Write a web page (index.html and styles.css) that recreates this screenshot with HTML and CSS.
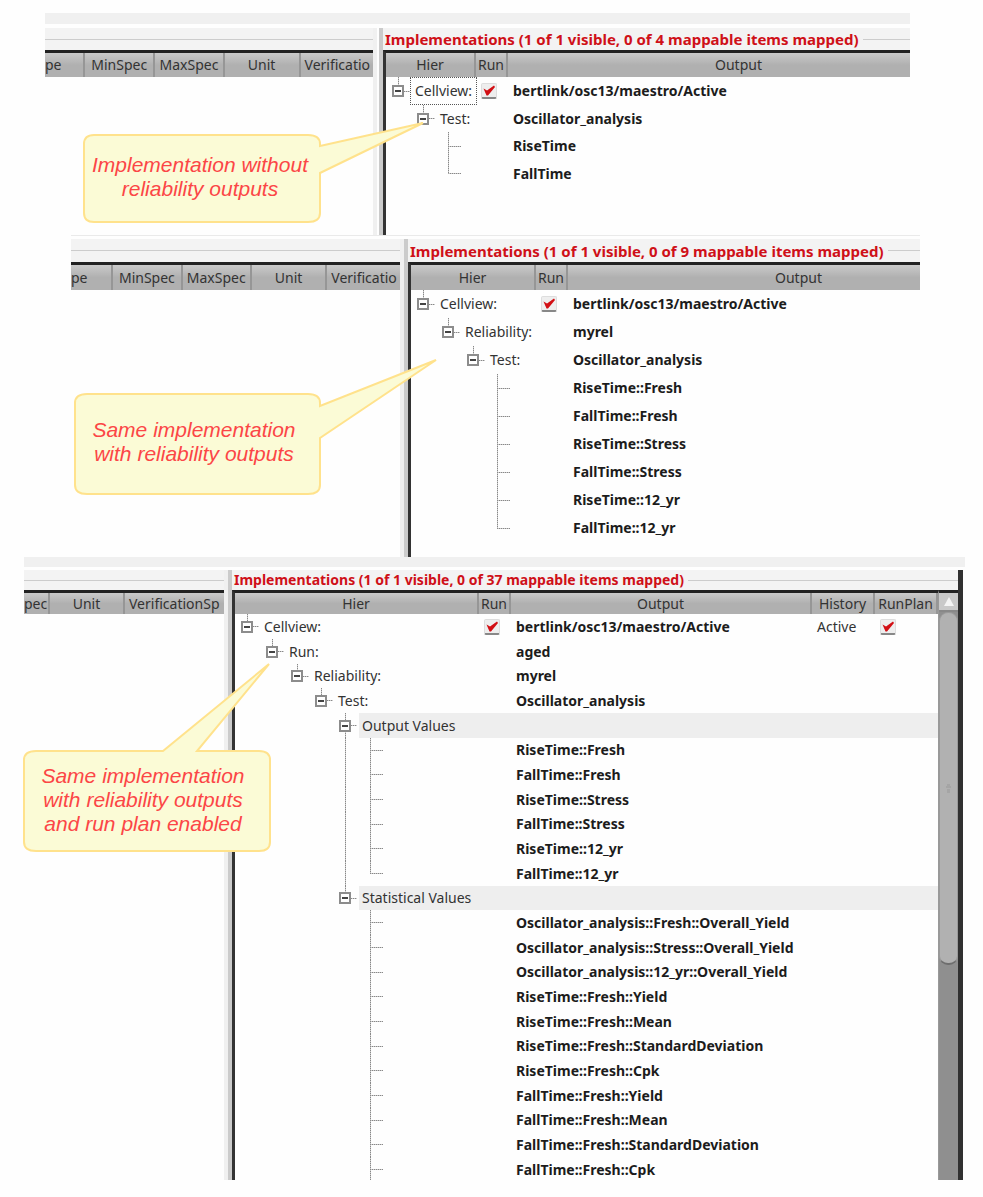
FILE: index.html
```html
<!DOCTYPE html>
<html lang="en">
<head>
<meta charset="utf-8">
<title>Implementations with and without reliability outputs</title>
<link rel="stylesheet" href="styles.css">
</head>
<body>
<main class="page">

<section class="shot shot-plain">
  <div class="strip"></div>
  <div class="split">
    <div class="pane">
      <div class="caption"><span class="rule"></span></div>
      <table class="grid">
        <colgroup><col class="w40"><col class="w69"><col class="w69"><col class="w75"><col class="w143"></colgroup>
        <thead><tr><th class="cut">pe</th><th>MinSpec</th><th>MaxSpec</th><th>Unit</th><th class="cut">Verificatio</th></tr></thead>
      </table>
    </div>
    <div class="sash"></div>
    <div class="pane framed">
      <div class="caption"><h2>Implementations (1 of 1 visible, 0 of 4 mappable items mapped)</h2><span class="rule"></span></div>
      <table class="grid">
        <colgroup><col class="w90"><col class="w32"><col class="w463"></colgroup>
        <thead><tr><th>Hier</th><th>Run</th><th>Output</th></tr></thead>
        <tbody>
          <tr><td><div class="tree"><button class="toggle" aria-label="Collapse Cellview"><i></i></button><span class="focus">Cellview:</span></div></td><td><input type="checkbox" checked aria-label="Run"></td><td class="out">bertlink/osc13/maestro/Active</td></tr>
          <tr><td><div class="tree l1"><button class="toggle" aria-label="Collapse Test"><i></i></button><span>Test:</span></div></td><td></td><td class="out">Oscillator_analysis</td></tr>
          <tr><td><div class="tree l2"><span class="branch"></span></div></td><td></td><td class="out">RiseTime</td></tr>
          <tr><td><div class="tree l2"><span class="branch last"></span></div></td><td></td><td class="out">FallTime</td></tr>
        </tbody>
      </table>
    </div>
  </div>
  <aside class="callout callout-plain">
    <svg width="344" height="104" viewBox="0 0 344 104" aria-hidden="true"><path d="M12 15H226Q238 15 238 24V26L341 3L238 53V93Q238 102 226 102H12Q2 102 2 93V24Q2 15 12 15Z"/></svg>
    <p>Implementation without<br>reliability outputs</p>
  </aside>
</section>

<section class="shot shot-rel">
  <div class="split">
    <div class="pane">
      <div class="caption"><span class="rule"></span></div>
      <table class="grid">
        <colgroup><col class="w42"><col class="w69"><col class="w69"><col class="w75"><col class="w143"></colgroup>
        <thead><tr><th class="cut">pe</th><th>MinSpec</th><th>MaxSpec</th><th>Unit</th><th class="cut">Verificatio</th></tr></thead>
      </table>
    </div>
    <div class="sash"></div>
    <div class="pane framed">
      <div class="caption"><h2>Implementations (1 of 1 visible, 0 of 9 mappable items mapped)</h2><span class="rule"></span></div>
      <table class="grid">
        <colgroup><col class="w125"><col class="w32"><col class="w463"></colgroup>
        <thead><tr><th>Hier</th><th>Run</th><th>Output</th></tr></thead>
        <tbody>
          <tr><td><div class="tree"><button class="toggle" aria-label="Collapse Cellview"><i></i></button><span>Cellview:</span></div></td><td><input type="checkbox" checked aria-label="Run"></td><td class="out">bertlink/osc13/maestro/Active</td></tr>
          <tr><td><div class="tree l1"><button class="toggle" aria-label="Collapse Reliability"><i></i></button><span>Reliability:</span></div></td><td></td><td class="out">myrel</td></tr>
          <tr><td><div class="tree l2"><button class="toggle" aria-label="Collapse Test"><i></i></button><span>Test:</span></div></td><td></td><td class="out">Oscillator_analysis</td></tr>
          <tr><td><div class="tree l3"><span class="branch"></span></div></td><td></td><td class="out">RiseTime::Fresh</td></tr>
          <tr><td><div class="tree l3"><span class="branch"></span></div></td><td></td><td class="out">FallTime::Fresh</td></tr>
          <tr><td><div class="tree l3"><span class="branch"></span></div></td><td></td><td class="out">RiseTime::Stress</td></tr>
          <tr><td><div class="tree l3"><span class="branch"></span></div></td><td></td><td class="out">FallTime::Stress</td></tr>
          <tr><td><div class="tree l3"><span class="branch"></span></div></td><td></td><td class="out">RiseTime::12_yr</td></tr>
          <tr><td><div class="tree l3"><span class="branch last"></span></div></td><td></td><td class="out">FallTime::12_yr</td></tr>
        </tbody>
      </table>
    </div>
  </div>
  <aside class="callout callout-rel">
    <svg width="368" height="140" viewBox="0 0 368 140" aria-hidden="true"><path d="M14 37H235Q247 37 247 46V49L363 3L247 81V128Q247 137 235 137H14Q2 137 2 128V46Q2 37 14 37Z"/></svg>
    <p>Same implementation<br>with reliability outputs</p>
  </aside>
</section>

<section class="shot shot-plan">
  <div class="strip"></div>
  <div class="split">
    <div class="pane">
      <div class="caption"><span class="rule"></span></div>
      <table class="grid">
        <colgroup><col class="w26"><col class="w75"><col class="w143"></colgroup>
        <thead><tr><th class="cut">pec</th><th>Unit</th><th class="cut">VerificationSp</th></tr></thead>
      </table>
    </div>
    <div class="sash"></div>
    <div class="pane framed boxed">
      <div class="caption"><h2>Implementations (1 of 1 visible, 0 of 37 mappable items mapped)</h2><span class="rule"></span></div>
      <div class="scroller">
      <table class="grid">
        <colgroup><col class="w244"><col class="w32"><col><col class="w63"><col class="w63"></colgroup>
        <thead><tr><th>Hier</th><th>Run</th><th>Output</th><th>History</th><th>RunPlan</th></tr></thead>
        <tbody>
          <tr><td><div class="tree"><button class="toggle" aria-label="Collapse Cellview"><i></i></button><span>Cellview:</span></div></td><td><input type="checkbox" checked aria-label="Run"></td><td class="out">bertlink/osc13/maestro/Active</td><td class="hist">Active</td><td><input type="checkbox" checked aria-label="RunPlan"></td></tr>
          <tr><td><div class="tree l1"><button class="toggle" aria-label="Collapse Run"><i></i></button><span>Run:</span></div></td><td></td><td class="out">aged</td><td></td><td></td></tr>
          <tr><td><div class="tree l2"><button class="toggle" aria-label="Collapse Reliability"><i></i></button><span>Reliability:</span></div></td><td></td><td class="out">myrel</td><td></td><td></td></tr>
          <tr><td><div class="tree l3"><button class="toggle" aria-label="Collapse Test"><i></i></button><span>Test:</span></div></td><td></td><td class="out">Oscillator_analysis</td><td></td><td></td></tr>
          <tr class="group"><td><div class="tree l4"><button class="toggle open" aria-label="Collapse Output Values"><i></i></button><span>Output Values</span></div></td><td></td><td></td><td></td><td></td></tr>
          <tr><td><div class="tree l4"><span class="guide"></span><span class="branch"></span></div></td><td></td><td class="out">RiseTime::Fresh</td><td></td><td></td></tr>
          <tr><td><div class="tree l4"><span class="guide"></span><span class="branch"></span></div></td><td></td><td class="out">FallTime::Fresh</td><td></td><td></td></tr>
          <tr><td><div class="tree l4"><span class="guide"></span><span class="branch"></span></div></td><td></td><td class="out">RiseTime::Stress</td><td></td><td></td></tr>
          <tr><td><div class="tree l4"><span class="guide"></span><span class="branch"></span></div></td><td></td><td class="out">FallTime::Stress</td><td></td><td></td></tr>
          <tr><td><div class="tree l4"><span class="guide"></span><span class="branch"></span></div></td><td></td><td class="out">RiseTime::12_yr</td><td></td><td></td></tr>
          <tr><td><div class="tree l4"><span class="guide"></span><span class="branch last"></span></div></td><td></td><td class="out">FallTime::12_yr</td><td></td><td></td></tr>
          <tr class="group"><td><div class="tree l4"><button class="toggle" aria-label="Collapse Statistical Values"><i></i></button><span>Statistical Values</span></div></td><td></td><td></td><td></td><td></td></tr>
          <tr><td><div class="tree l5"><span class="branch"></span></div></td><td></td><td class="out">Oscillator_analysis::Fresh::Overall_Yield</td><td></td><td></td></tr>
          <tr><td><div class="tree l5"><span class="branch"></span></div></td><td></td><td class="out">Oscillator_analysis::Stress::Overall_Yield</td><td></td><td></td></tr>
          <tr><td><div class="tree l5"><span class="branch"></span></div></td><td></td><td class="out">Oscillator_analysis::12_yr::Overall_Yield</td><td></td><td></td></tr>
          <tr><td><div class="tree l5"><span class="branch"></span></div></td><td></td><td class="out">RiseTime::Fresh::Yield</td><td></td><td></td></tr>
          <tr><td><div class="tree l5"><span class="branch"></span></div></td><td></td><td class="out">RiseTime::Fresh::Mean</td><td></td><td></td></tr>
          <tr><td><div class="tree l5"><span class="branch"></span></div></td><td></td><td class="out">RiseTime::Fresh::StandardDeviation</td><td></td><td></td></tr>
          <tr><td><div class="tree l5"><span class="branch"></span></div></td><td></td><td class="out">RiseTime::Fresh::Cpk</td><td></td><td></td></tr>
          <tr><td><div class="tree l5"><span class="branch"></span></div></td><td></td><td class="out">FallTime::Fresh::Yield</td><td></td><td></td></tr>
          <tr><td><div class="tree l5"><span class="branch"></span></div></td><td></td><td class="out">FallTime::Fresh::Mean</td><td></td><td></td></tr>
          <tr><td><div class="tree l5"><span class="branch"></span></div></td><td></td><td class="out">FallTime::Fresh::StandardDeviation</td><td></td><td></td></tr>
          <tr><td><div class="tree l5"><span class="branch"></span></div></td><td></td><td class="out">FallTime::Fresh::Cpk</td><td></td><td></td></tr>
        </tbody>
      </table>
      <div class="scrollbar">
        <button class="up" aria-label="Scroll up"><svg width="10" height="9" viewBox="0 0 10 9" aria-hidden="true"><path d="M5 0L10 9H0Z" fill="#f4f4f4"/></svg></button>
        <div class="thumb"><svg width="5" height="9" viewBox="0 0 5 9" aria-hidden="true"><path d="M1 1H4M0 3H5M1 6H4M1 8H4" stroke="#999"/></svg></div>
      </div>
      </div>
    </div>
  </div>
  <aside class="callout callout-plan">
    <svg width="250" height="192" viewBox="0 0 250 192" aria-hidden="true"><path d="M14 90H140L246 3L174 90H236Q247 90 247 99V181Q247 190 236 190H13Q1 190 1 181V99Q1 90 13 90Z"/></svg>
    <p>Same implementation<br>with reliability outputs<br>and run plan enabled</p>
  </aside>
</section>

</main>
</body>
</html>
```
FILE: styles.css
```css
* { box-sizing: border-box; }

body {
  margin: 0;
  background: #fefefe;
  color: #333;
  font: 14px/20px "Noto Sans", "Open Sans", sans-serif;
}

.page { padding: 13px 0 16px; overflow: hidden; }

/* One captured window */
.shot { position: relative; }
.shot-plain { margin: 0 73px 0 45px; --row: 28px; --band: 22px; --head: 24px; }
.shot-rel { margin: 0 63px 0 71px; border-top: 1px solid #eaeaea; padding-top: 3px; --row: 28px; --band: 23px; --head: 25px; }
.shot-plan { margin: 0 18px 0 24px; --row: 25px; --band: 20px; --head: 21px; }

.strip { height: 11px; margin-bottom: 4px; background: #f0f0f0; }
.shot-plan .strip { height: 10px; margin-bottom: 3px; }

.split { display: grid; }
.shot-plain .split { grid-template-columns: 328px 10px 1fr; height: 207px; }
.shot-rel .split { grid-template-columns: 329px 8px 1fr; height: 318px; }
.shot-plan .split { grid-template-columns: 200px 8px 1fr; height: 610px; }

.pane { min-width: 0; overflow: hidden; display: flex; flex-direction: column; }

.sash { border-left: 4px solid #f0f0f0; border-right: 4px solid #cbcbcb; }

/* Group title with its rule */
.caption {
  display: flex;
  align-items: center;
  height: var(--band);
  flex: none;
  background: #f3f3f3;
}
.caption h2 {
  margin: 0 4px 0 2px;
  font-size: 15px;
  line-height: 20px;
  color: #cf1018;
  white-space: nowrap;
}
.shot-plan .caption h2 { font-size: 14px; }
.rule { flex: 1; height: 1px; background: #ccc; }

/* Data table */
.grid {
  width: 100%;
  table-layout: fixed;
  border-collapse: separate;
  border-spacing: 0;
  border-top: 3px solid #222;
}
.framed .grid { border-left: 3px solid #333; }
.shot-plain .framed .grid { width: 588px; }
.shot-rel .framed .grid { width: 623px; }
.pane:not(.framed) .grid { width: 400px; }
.shot-plan .pane:not(.framed) .grid { width: 244px; }
.shot .framed { background: linear-gradient(#333, #333) 0 var(--band) / 3px 100% no-repeat; }

.grid th {
  height: var(--head);
  padding: 0;
  font-weight: 400;
  text-align: center;
  white-space: nowrap;
  line-height: 20px;
  background: linear-gradient(#cacaca, #b0b0b0 50%, #b0b0b0);
  border-right: 2px solid #969696;
}
.grid th.cut { text-align: left; padding-left: 4px; }
.grid th.cut:first-child { padding-left: 0; }

.grid td {
  height: var(--row);
  padding: 0;
  line-height: 20px;
  white-space: nowrap;
}
.shot-plain .grid tr:nth-child(even) { --row: 27px; }
.shot-plan .grid tr:nth-child(3n) { --row: 24px; }
.grid .out { padding-left: 5px; font-weight: 700; color: #1c1c1c; }
.grid .hist { padding-left: 5px; }

.w26 { width: 26px; }
.w32 { width: 32px; }
.w40 { width: 40px; }
.w42 { width: 42px; }
.w63 { width: 63px; }
.w69 { width: 69px; }
.w75 { width: 75px; }
.w90 { width: 90px; }
.w125 { width: 125px; }
.w143 { width: 143px; }
.w244 { width: 244px; }
.w463 { width: 463px; }

/* Tree column */
.tree { display: flex; align-items: center; height: var(--row); }
.l1 { padding-left: 25px; }
.l2 { padding-left: 50px; }
.l3 { padding-left: 74px; }
.l4 { padding-left: 98px; }
.l5 { padding-left: 123px; }
.tree > span:last-child { padding: 0 4px; }

.toggle, .tree .branch, .guide {
  --v: repeating-linear-gradient(#888 0 1px, #ccc 1px 2px);
  --h: repeating-linear-gradient(90deg, #888 0 1px, #ccc 1px 2px);
  flex: none;
  width: 25px;
  height: 100%;
  padding: 0;
  border: 0;
}
.toggle {
  display: flex;
  align-items: center;
  background: var(--v) 12px 0 / 1px 40% no-repeat, var(--h) 18px 50% / 6px 1px no-repeat;
}
.toggle.open { background: var(--v) 12px 0 / 1px 100% no-repeat, var(--h) 18px 50% / 6px 1px no-repeat; }
.toggle i {
  width: 12px;
  height: 12px;
  margin-left: 6px;
  border: 2px solid #8c8c8c;
  background: linear-gradient(#444, #444) 50% 50% / 6px 2px no-repeat #fefefe;
}
.tree .branch { background: var(--v) 12px 0 / 1px 100% no-repeat, var(--h) 12px 50% / 13px 1px no-repeat; }
.tree .branch.last { background: var(--v) 12px 0 / 1px 50% no-repeat, var(--h) 12px 50% / 13px 1px no-repeat; }
.guide { background: var(--v) 12px 0 / 1px 100% no-repeat; }

.focus { outline: 1px dotted #555; line-height: 26px; }

.group td { background: #eee; }
.group td:first-child { background: linear-gradient(#eee, #eee) 124px 0 no-repeat; }

input[type="checkbox"] {
  appearance: none;
  display: block;
  width: 16px;
  height: 16px;
  margin: 0 0 0 5px;
  border: 1px solid #ddd;
  border-bottom: 2px solid #888;
  border-radius: 2px;
  background: url("data:image/svg+xml,%3Csvg xmlns='http://www.w3.org/2000/svg' viewBox='0 0 14 13'%3E%3Cpath d='M1.5 4.5L5 6.5L12 1.5L13 3L6 11.5H4.5Z' fill='%23d20f14'/%3E%3C/svg%3E") center / 14px 13px no-repeat #eee;
}

/* Vertical scrollbar */
.boxed { border-right: 5px solid #303030; margin-right: 2px; }
.scroller { display: flex; flex: 1; min-height: 0; }
.scroller .grid { flex: 1; width: auto; min-width: 0; }
.scrollbar {
  flex: none;
  width: 20px;
  display: flex;
  flex-direction: column;
  border-top: 3px solid #222;
  border-left: 1px solid #999;
  background: #8f8f8f;
}
.up { height: 19px; padding: 0; border: 0; border-bottom: 2px solid #888; background: #c9c9c9; line-height: 0; }
.thumb {
  height: 353px;
  display: grid;
  place-items: center;
  border: 1px solid #999;
  border-bottom: 2px solid #6e6e6e;
  border-radius: 9px;
  background: #b1b1b1;
}

/* Speech-bubble notes over the windows */
.callout { position: absolute; }
.callout svg { display: block; }
.callout path { fill: #fbfbd6; stroke: #ffe28c; stroke-width: 2; }
.callout p {
  position: absolute;
  margin: 0;
  text-align: center;
  white-space: nowrap;
  font: italic 21px/24px "Liberation Sans", Arial, sans-serif;
  color: #fb4646;
}
.callout-plain { left: 37px; top: 107px; }
.callout-plain p { left: 2px; width: 232px; top: 33px; }
.callout-rel { left: 2px; top: 121px; }
.callout-rel p { left: 0; width: 242px; top: 61px; }
.callout-plan { left: -1px; top: 104px; }
.callout-plan p { left: 0; width: 240px; top: 103px; }
```
